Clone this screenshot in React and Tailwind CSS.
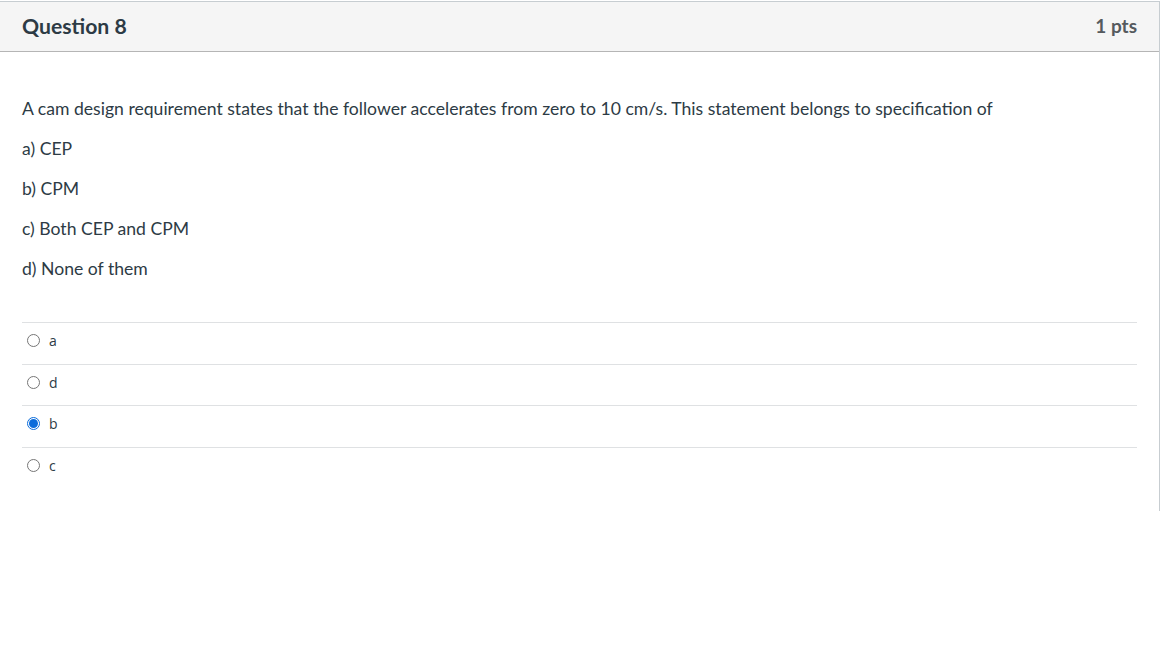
import React from "react";

const answers = [
  { id: "a", checked: false },
  { id: "d", checked: false },
  { id: "b", checked: true },
  { id: "c", checked: false },
];

function Radio({ checked }) {
  if (checked) {
    return (
      <span className="flex h-[13px] w-[13px] items-center justify-center rounded-full border border-[#0b6cdb] bg-white">
        <span className="h-[9px] w-[9px] rounded-full bg-[#0b6cdb]" />
      </span>
    );
  }
  return <span className="block h-[13px] w-[13px] rounded-full border border-[#767676] bg-white" />;
}

export default function App() {
  return (
    <div className="h-[648px] w-[1163px] bg-white font-['Lato','Noto_Sans',sans-serif] text-[#2d3b45]">
      <div className="ml-0 mt-px h-[510px] w-[1160px] border-r border-t border-[#c7cdd1]">
        <div className="flex h-[50px] items-center justify-between border-b border-[#b5b5b5] bg-[#f5f5f5] pl-[22px] pr-[22px]">
          <h2 className="text-[21.2px] font-bold text-[#2d3b45]">Question 8</h2>
          <span className="text-[19px] font-bold text-[#555a5e]">1 pts</span>
        </div>
        <div className="pl-[22px] pr-[22px]">
          <div className="pt-[45px] text-[17.6px] leading-[24px]">
            <p>A cam design requirement states that the follower accelerates from zero to 10 cm/s. This statement belongs to specification of</p>
            <p className="mt-[16px]">a) CEP</p>
            <p className="mt-[16px]">b) CPM</p>
            <p className="mt-[16px]">c) Both CEP and CPM</p>
            <p className="mt-[16px]">d) None of them</p>
          </div>
          <div className="mt-[41px] w-[1115px]">
            {answers.map((a) => (
              <div key={a.id} className="flex h-[41.7px] items-center border-t border-[#dfe1e3] pb-[6px] pl-[5px]">
                <Radio checked={a.checked} />
                <span className="ml-[9px] font-['Open_Sans',sans-serif] text-[14px] text-[#2d3b45]">{a.id}</span>
              </div>
            ))}
          </div>
        </div>
      </div>
    </div>
  );
}
